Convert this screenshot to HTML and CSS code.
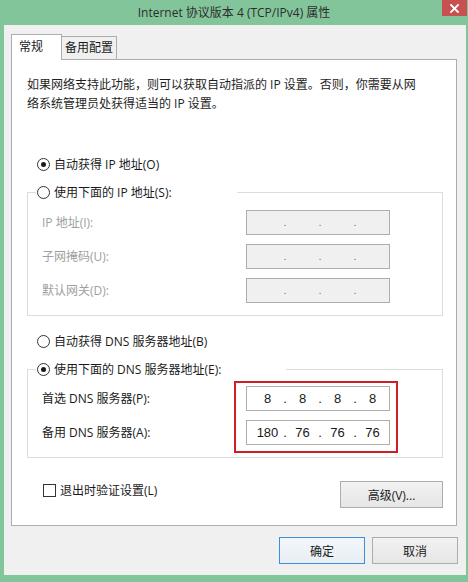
FILE: index.html
```html
<!DOCTYPE html>
<html lang="zh-CN">
<head>
<meta charset="utf-8">
<title>Internet 协议版本 4 (TCP/IPv4) 属性</title>
<link rel="stylesheet" href="styles.css">
</head>
<body>
<div class="window">
  <div class="titlebar">
    <div class="title">Internet 协议版本 4 (TCP/IPv4) 属性</div>
    <div class="close">
      <svg width="9" height="9" viewBox="0 0 9 9"><path d="M1 1L8 8M8 1L1 8" stroke="#fff" stroke-width="1.8" stroke-linecap="square"/></svg>
    </div>
  </div>
  <div class="client">
    <div class="tabs">
      <div class="tab active">常规</div>
      <div class="tab">备用配置</div>
    </div>
    <div class="panel">
      <p class="intro">如果网络支持此功能，则可以获取自动指派的 IP 设置。否则，你需要从网<br>络系统管理员处获得适当的 IP 设置。</p>

      <div class="radio-row r1"><span class="radio checked"></span>自动获得 IP 地址(O)</div>

      <fieldset class="group">
        <legend class="legend legend-ip"><span class="radio"></span>使用下面的 IP 地址(S):</legend>
        <div class="group-body">
          <span class="label disabled">IP 地址(I):</span>
          <div class="ipbox off"><span></span><span class="dot">.</span><span></span><span class="dot">.</span><span></span><span class="dot">.</span><span></span></div>
          <span class="label disabled">子网掩码(U):</span>
          <div class="ipbox off"><span></span><span class="dot">.</span><span></span><span class="dot">.</span><span></span><span class="dot">.</span><span></span></div>
          <span class="label disabled">默认网关(D):</span>
          <div class="ipbox off"><span></span><span class="dot">.</span><span></span><span class="dot">.</span><span></span><span class="dot">.</span><span></span></div>
        </div>
      </fieldset>

      <div class="radio-row r3"><span class="radio"></span>自动获得 DNS 服务器地址(B)</div>

      <fieldset class="group">
        <legend class="legend legend-dns"><span class="radio checked"></span>使用下面的 DNS 服务器地址(E):</legend>
        <div class="group-body dns-body">
          <span class="label">首选 DNS 服务器(P):</span>
          <div class="ipbox"><span>8</span><span class="dot">.</span><span>8</span><span class="dot">.</span><span>8</span><span class="dot">.</span><span>8</span></div>
          <span class="label">备用 DNS 服务器(A):</span>
          <div class="ipbox"><span>180</span><span class="dot">.</span><span>76</span><span class="dot">.</span><span>76</span><span class="dot">.</span><span>76</span></div>
          <div class="highlight"></div>
        </div>
      </fieldset>

      <div class="bottom-row">
        <div class="check-row"><span class="checkbox"></span>退出时验证设置(L)</div>
        <div class="btn btn-adv">高级(V)...</div>
      </div>
    </div>
    <div class="actions">
      <div class="btn btn-ok">确定</div>
      <div class="btn btn-cancel">取消</div>
    </div>
  </div>
</div>
</body>
</html>
```

FILE: styles.css
```css
* { box-sizing: border-box; }
html, body { margin: 0; padding: 0; }
body {
  width: 468px;
  height: 582px;
  overflow: hidden;
  background: #83c59a;
  font-family: "Open Sans", "Noto Sans CJK SC", sans-serif;
  font-size: 12px;
  color: #1a1a1a;
}
.window { display: flex; flex-direction: column; }
.titlebar {
  height: 25px;
  display: grid;
  grid-template-columns: 1fr auto 1fr;
  align-items: start;
}
.title {
  grid-column: 2;
  line-height: 25px;
  color: #2d2d2d;
  white-space: nowrap;
}
.close {
  grid-column: 3;
  justify-self: end;
  width: 25px;
  height: 16px;
  margin-right: 1px;
  background: #c75050;
  display: flex;
  align-items: center;
  justify-content: center;
}
.client {
  margin: 0 2px 0 4px;
  height: 550px;
  background: #f0f0f0;
  padding: 9px 8px 0 7px;
}
.tabs {
  display: flex;
  align-items: flex-end;
  height: 25px;
}
.tab {
  height: 23px;
  width: 56px;
  margin-left: -1px;
  border: 1px solid #adadad;
  border-bottom: 0;
  background: #f0f0f0;
  text-align: center;
  line-height: 22px;
  white-space: nowrap;
}
.tab.active {
  height: 26px;
  width: 51px;
  margin-left: 0;
  margin-bottom: -1px;
  background: #fff;
  position: relative;
  z-index: 1;
  text-align: left;
  padding-left: 7px;
  line-height: 24px;
}
.panel {
  width: 446px;
  height: 467px;
  border: 1px solid #adadad;
  background: #fff;
}
.intro {
  margin: 15px 0 0 15px;
  line-height: 19px;
  color: #1e1e1e;
  white-space: nowrap;
}
.radio-row {
  display: flex;
  align-items: center;
  height: 20px;
  margin-left: 25px;
  white-space: nowrap;
}
.r1 { margin-top: 41px; }
.r3 { margin-top: 15px; }
.radio {
  width: 13px;
  height: 13px;
  border: 1px solid #333;
  border-radius: 50%;
  background: #fff;
  margin-right: 4px;
  display: flex;
  align-items: center;
  justify-content: center;
  flex: none;
}
.radio.checked::after {
  content: "";
  width: 5px;
  height: 5px;
  border-radius: 50%;
  background: #1a1a1a;
}
.group {
  margin: 8px 13px 0 15px;
  padding: 0;
  border: 1px solid #dcdcdc;
  min-width: 0;
}
.legend {
  margin-left: 8px;
  padding: 0 0 0 1px;
  height: 20px;
  display: flex;
  align-items: center;
  white-space: nowrap;
}
.legend-ip { width: 201px; }
.legend-dns { width: 250px; }
.group-body {
  display: grid;
  grid-template-columns: 204px 144px;
  row-gap: 9px;
  align-items: center;
  padding: 8px 0 12px 14px;
}
.dns-body {
  padding-top: 7px;
  position: relative;
}
.label {
  line-height: 25px;
  white-space: nowrap;
}
.label.disabled { color: #a0a0a0; }
.ipbox {
  height: 25px;
  border: 1px solid #adadad;
  background: #fff;
  display: grid;
  grid-template-columns: 31px 4px 31px 4px 31px 4px 31px;
  padding-left: 5px;
  align-items: center;
  text-align: center;
  font-family: "Liberation Sans", sans-serif;
  font-size: 13px;
  line-height: 23px;
  color: #1a1a1a;
}
.ipbox.off {
  background: #f0f0f0;
  color: #7a7a7a;
  font-size: 11px;
}
.highlight {
  position: absolute;
  left: 206px;
  top: 2px;
  width: 164px;
  height: 72px;
  border: 2px solid #cc1f28;
}
.bottom-row {
  display: flex;
  justify-content: space-between;
  align-items: flex-start;
  margin: 23px 13px 0 31px;
}
.check-row {
  display: flex;
  align-items: center;
  height: 18px;
  white-space: nowrap;
}
.checkbox {
  width: 13px;
  height: 13px;
  border: 1px solid #333;
  background: #fff;
  margin-right: 4px;
}
.btn {
  height: 27px;
  border: 1px solid #acacac;
  background: linear-gradient(#f2f2f2, #e6e6e6);
  display: flex;
  align-items: center;
  justify-content: center;
  white-space: nowrap;
}
.btn-adv { width: 103px; }
.actions {
  display: flex;
  justify-content: flex-end;
  gap: 7px;
  margin-top: 11px;
}
.btn-ok, .btn-cancel { width: 86px; }
.btn-ok {
  border-color: #3c8fd9;
  background: linear-gradient(#f3f7fb, #e8eef5);
}
```
